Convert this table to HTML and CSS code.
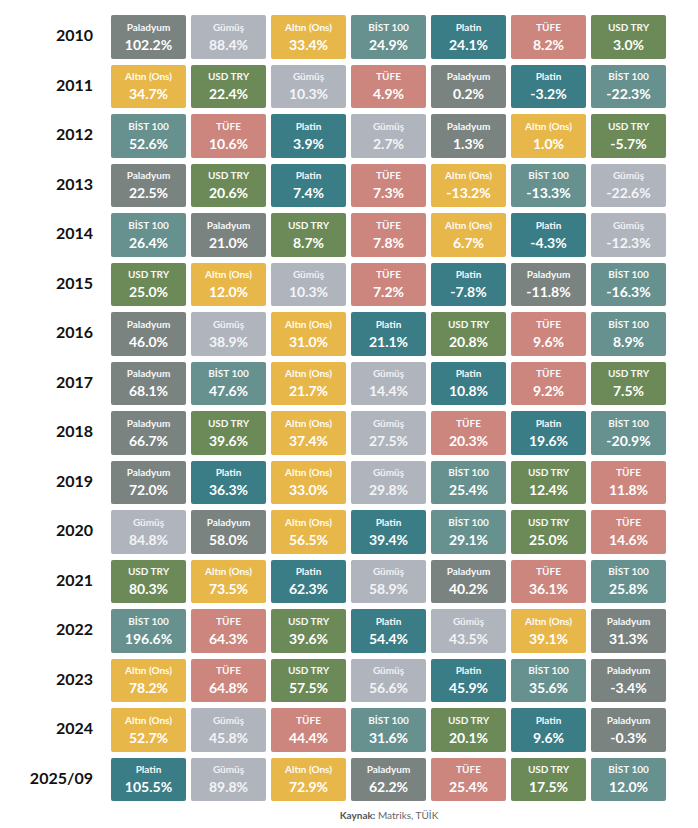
FILE: index.html
```html
<!DOCTYPE html>
<html lang="tr">
<head>
<meta charset="utf-8">
<link rel="stylesheet" href="styles.css">
</head>
<body>
<div class="chart">
  <div class="grid">
    <div class="year">2010</div>
    <div class="cell pal"><span class="lbl">Paladyum</span><span class="val">102.2%</span></div>
    <div class="cell gum"><span class="lbl">Gümüş</span><span class="val">88.4%</span></div>
    <div class="cell alt"><span class="lbl">Altın (Ons)</span><span class="val">33.4%</span></div>
    <div class="cell bis"><span class="lbl">BİST 100</span><span class="val">24.9%</span></div>
    <div class="cell pla"><span class="lbl">Platin</span><span class="val">24.1%</span></div>
    <div class="cell tuf"><span class="lbl">TÜFE</span><span class="val">8.2%</span></div>
    <div class="cell usd"><span class="lbl">USD TRY</span><span class="val">3.0%</span></div>

    <div class="year">2011</div>
    <div class="cell alt"><span class="lbl">Altın (Ons)</span><span class="val">34.7%</span></div>
    <div class="cell usd"><span class="lbl">USD TRY</span><span class="val">22.4%</span></div>
    <div class="cell gum"><span class="lbl">Gümüş</span><span class="val">10.3%</span></div>
    <div class="cell tuf"><span class="lbl">TÜFE</span><span class="val">4.9%</span></div>
    <div class="cell pal"><span class="lbl">Paladyum</span><span class="val">0.2%</span></div>
    <div class="cell pla"><span class="lbl">Platin</span><span class="val">-3.2%</span></div>
    <div class="cell bis"><span class="lbl">BİST 100</span><span class="val">-22.3%</span></div>

    <div class="year">2012</div>
    <div class="cell bis"><span class="lbl">BİST 100</span><span class="val">52.6%</span></div>
    <div class="cell tuf"><span class="lbl">TÜFE</span><span class="val">10.6%</span></div>
    <div class="cell pla"><span class="lbl">Platin</span><span class="val">3.9%</span></div>
    <div class="cell gum"><span class="lbl">Gümüş</span><span class="val">2.7%</span></div>
    <div class="cell pal"><span class="lbl">Paladyum</span><span class="val">1.3%</span></div>
    <div class="cell alt"><span class="lbl">Altın (Ons)</span><span class="val">1.0%</span></div>
    <div class="cell usd"><span class="lbl">USD TRY</span><span class="val">-5.7%</span></div>

    <div class="year">2013</div>
    <div class="cell pal"><span class="lbl">Paladyum</span><span class="val">22.5%</span></div>
    <div class="cell usd"><span class="lbl">USD TRY</span><span class="val">20.6%</span></div>
    <div class="cell pla"><span class="lbl">Platin</span><span class="val">7.4%</span></div>
    <div class="cell tuf"><span class="lbl">TÜFE</span><span class="val">7.3%</span></div>
    <div class="cell alt"><span class="lbl">Altın (Ons)</span><span class="val">-13.2%</span></div>
    <div class="cell bis"><span class="lbl">BİST 100</span><span class="val">-13.3%</span></div>
    <div class="cell gum"><span class="lbl">Gümüş</span><span class="val">-22.6%</span></div>

    <div class="year">2014</div>
    <div class="cell bis"><span class="lbl">BİST 100</span><span class="val">26.4%</span></div>
    <div class="cell pal"><span class="lbl">Paladyum</span><span class="val">21.0%</span></div>
    <div class="cell usd"><span class="lbl">USD TRY</span><span class="val">8.7%</span></div>
    <div class="cell tuf"><span class="lbl">TÜFE</span><span class="val">7.8%</span></div>
    <div class="cell alt"><span class="lbl">Altın (Ons)</span><span class="val">6.7%</span></div>
    <div class="cell pla"><span class="lbl">Platin</span><span class="val">-4.3%</span></div>
    <div class="cell gum"><span class="lbl">Gümüş</span><span class="val">-12.3%</span></div>

    <div class="year">2015</div>
    <div class="cell usd"><span class="lbl">USD TRY</span><span class="val">25.0%</span></div>
    <div class="cell alt"><span class="lbl">Altın (Ons)</span><span class="val">12.0%</span></div>
    <div class="cell gum"><span class="lbl">Gümüş</span><span class="val">10.3%</span></div>
    <div class="cell tuf"><span class="lbl">TÜFE</span><span class="val">7.2%</span></div>
    <div class="cell pla"><span class="lbl">Platin</span><span class="val">-7.8%</span></div>
    <div class="cell pal"><span class="lbl">Paladyum</span><span class="val">-11.8%</span></div>
    <div class="cell bis"><span class="lbl">BİST 100</span><span class="val">-16.3%</span></div>

    <div class="year">2016</div>
    <div class="cell pal"><span class="lbl">Paladyum</span><span class="val">46.0%</span></div>
    <div class="cell gum"><span class="lbl">Gümüş</span><span class="val">38.9%</span></div>
    <div class="cell alt"><span class="lbl">Altın (Ons)</span><span class="val">31.0%</span></div>
    <div class="cell pla"><span class="lbl">Platin</span><span class="val">21.1%</span></div>
    <div class="cell usd"><span class="lbl">USD TRY</span><span class="val">20.8%</span></div>
    <div class="cell tuf"><span class="lbl">TÜFE</span><span class="val">9.6%</span></div>
    <div class="cell bis"><span class="lbl">BİST 100</span><span class="val">8.9%</span></div>

    <div class="year">2017</div>
    <div class="cell pal"><span class="lbl">Paladyum</span><span class="val">68.1%</span></div>
    <div class="cell bis"><span class="lbl">BİST 100</span><span class="val">47.6%</span></div>
    <div class="cell alt"><span class="lbl">Altın (Ons)</span><span class="val">21.7%</span></div>
    <div class="cell gum"><span class="lbl">Gümüş</span><span class="val">14.4%</span></div>
    <div class="cell pla"><span class="lbl">Platin</span><span class="val">10.8%</span></div>
    <div class="cell tuf"><span class="lbl">TÜFE</span><span class="val">9.2%</span></div>
    <div class="cell usd"><span class="lbl">USD TRY</span><span class="val">7.5%</span></div>

    <div class="year">2018</div>
    <div class="cell pal"><span class="lbl">Paladyum</span><span class="val">66.7%</span></div>
    <div class="cell usd"><span class="lbl">USD TRY</span><span class="val">39.6%</span></div>
    <div class="cell alt"><span class="lbl">Altın (Ons)</span><span class="val">37.4%</span></div>
    <div class="cell gum"><span class="lbl">Gümüş</span><span class="val">27.5%</span></div>
    <div class="cell tuf"><span class="lbl">TÜFE</span><span class="val">20.3%</span></div>
    <div class="cell pla"><span class="lbl">Platin</span><span class="val">19.6%</span></div>
    <div class="cell bis"><span class="lbl">BİST 100</span><span class="val">-20.9%</span></div>

    <div class="year">2019</div>
    <div class="cell pal"><span class="lbl">Paladyum</span><span class="val">72.0%</span></div>
    <div class="cell pla"><span class="lbl">Platin</span><span class="val">36.3%</span></div>
    <div class="cell alt"><span class="lbl">Altın (Ons)</span><span class="val">33.0%</span></div>
    <div class="cell gum"><span class="lbl">Gümüş</span><span class="val">29.8%</span></div>
    <div class="cell bis"><span class="lbl">BİST 100</span><span class="val">25.4%</span></div>
    <div class="cell usd"><span class="lbl">USD TRY</span><span class="val">12.4%</span></div>
    <div class="cell tuf"><span class="lbl">TÜFE</span><span class="val">11.8%</span></div>

    <div class="year">2020</div>
    <div class="cell gum"><span class="lbl">Gümüş</span><span class="val">84.8%</span></div>
    <div class="cell pal"><span class="lbl">Paladyum</span><span class="val">58.0%</span></div>
    <div class="cell alt"><span class="lbl">Altın (Ons)</span><span class="val">56.5%</span></div>
    <div class="cell pla"><span class="lbl">Platin</span><span class="val">39.4%</span></div>
    <div class="cell bis"><span class="lbl">BİST 100</span><span class="val">29.1%</span></div>
    <div class="cell usd"><span class="lbl">USD TRY</span><span class="val">25.0%</span></div>
    <div class="cell tuf"><span class="lbl">TÜFE</span><span class="val">14.6%</span></div>

    <div class="year">2021</div>
    <div class="cell usd"><span class="lbl">USD TRY</span><span class="val">80.3%</span></div>
    <div class="cell alt"><span class="lbl">Altın (Ons)</span><span class="val">73.5%</span></div>
    <div class="cell pla"><span class="lbl">Platin</span><span class="val">62.3%</span></div>
    <div class="cell gum"><span class="lbl">Gümüş</span><span class="val">58.9%</span></div>
    <div class="cell pal"><span class="lbl">Paladyum</span><span class="val">40.2%</span></div>
    <div class="cell tuf"><span class="lbl">TÜFE</span><span class="val">36.1%</span></div>
    <div class="cell bis"><span class="lbl">BİST 100</span><span class="val">25.8%</span></div>

    <div class="year">2022</div>
    <div class="cell bis"><span class="lbl">BİST 100</span><span class="val">196.6%</span></div>
    <div class="cell tuf"><span class="lbl">TÜFE</span><span class="val">64.3%</span></div>
    <div class="cell usd"><span class="lbl">USD TRY</span><span class="val">39.6%</span></div>
    <div class="cell pla"><span class="lbl">Platin</span><span class="val">54.4%</span></div>
    <div class="cell gum"><span class="lbl">Gümüş</span><span class="val">43.5%</span></div>
    <div class="cell alt"><span class="lbl">Altın (Ons)</span><span class="val">39.1%</span></div>
    <div class="cell pal"><span class="lbl">Paladyum</span><span class="val">31.3%</span></div>

    <div class="year">2023</div>
    <div class="cell alt"><span class="lbl">Altın (Ons)</span><span class="val">78.2%</span></div>
    <div class="cell tuf"><span class="lbl">TÜFE</span><span class="val">64.8%</span></div>
    <div class="cell usd"><span class="lbl">USD TRY</span><span class="val">57.5%</span></div>
    <div class="cell gum"><span class="lbl">Gümüş</span><span class="val">56.6%</span></div>
    <div class="cell pla"><span class="lbl">Platin</span><span class="val">45.9%</span></div>
    <div class="cell bis"><span class="lbl">BİST 100</span><span class="val">35.6%</span></div>
    <div class="cell pal"><span class="lbl">Paladyum</span><span class="val">-3.4%</span></div>

    <div class="year">2024</div>
    <div class="cell alt"><span class="lbl">Altın (Ons)</span><span class="val">52.7%</span></div>
    <div class="cell gum"><span class="lbl">Gümüş</span><span class="val">45.8%</span></div>
    <div class="cell tuf"><span class="lbl">TÜFE</span><span class="val">44.4%</span></div>
    <div class="cell bis"><span class="lbl">BİST 100</span><span class="val">31.6%</span></div>
    <div class="cell usd"><span class="lbl">USD TRY</span><span class="val">20.1%</span></div>
    <div class="cell pla"><span class="lbl">Platin</span><span class="val">9.6%</span></div>
    <div class="cell pal"><span class="lbl">Paladyum</span><span class="val">-0.3%</span></div>

    <div class="year">2025/09</div>
    <div class="cell pla"><span class="lbl">Platin</span><span class="val">105.5%</span></div>
    <div class="cell gum"><span class="lbl">Gümüş</span><span class="val">89.8%</span></div>
    <div class="cell alt"><span class="lbl">Altın (Ons)</span><span class="val">72.9%</span></div>
    <div class="cell pal"><span class="lbl">Paladyum</span><span class="val">62.2%</span></div>
    <div class="cell tuf"><span class="lbl">TÜFE</span><span class="val">25.4%</span></div>
    <div class="cell usd"><span class="lbl">USD TRY</span><span class="val">17.5%</span></div>
    <div class="cell bis"><span class="lbl">BİST 100</span><span class="val">12.0%</span></div>
  </div>
  <p class="source"><b>Kaynak:</b> Matriks, TÜİK</p>
</div>
</body>
</html>
```
FILE: styles.css
```css
html, body {
  margin: 0;
  padding: 0;
  background: #ffffff;
}
body {
  font-family: Lato, "Open Sans", "DejaVu Sans", sans-serif;
}
.chart {
  padding: 15px 0 0 0;
  width: 667px;
}
.grid {
  display: grid;
  grid-template-columns: 106px repeat(7, 75px);
  grid-auto-rows: 43.5px;
  column-gap: 5px;
  row-gap: 6px;
}
.year {
  align-self: center;
  padding-right: 13px;
  margin-top: -4px;
  text-align: right;
  font-weight: 700;
  font-size: 16px;
  color: #111;
}
.cell {
  border-radius: 2px;
  display: flex;
  flex-direction: column;
  align-items: center;
  justify-content: center;
  color: #ffffff;
  font-weight: 700;
}
.lbl {
  font-size: 10px;
  line-height: 12px;
  opacity: 0.95;
}
.val {
  font-size: 14px;
  line-height: 17px;
  margin-top: 3px;
}
.pal { background: #7a8380; }
.gum { background: #b0b4bd; color: #f4f5f7; }
.alt { background: #e8b74a; }
.bis { background: #66918f; }
.pla { background: #3b7d86; }
.tuf { background: #cc867e; }
.usd { background: #6b8a57; }
.source {
  margin: 8px 0 0 111px;
  text-align: center;
  font-size: 10px;
  color: #666;
}
.source b { font-weight: 700; color: #555; }
```
